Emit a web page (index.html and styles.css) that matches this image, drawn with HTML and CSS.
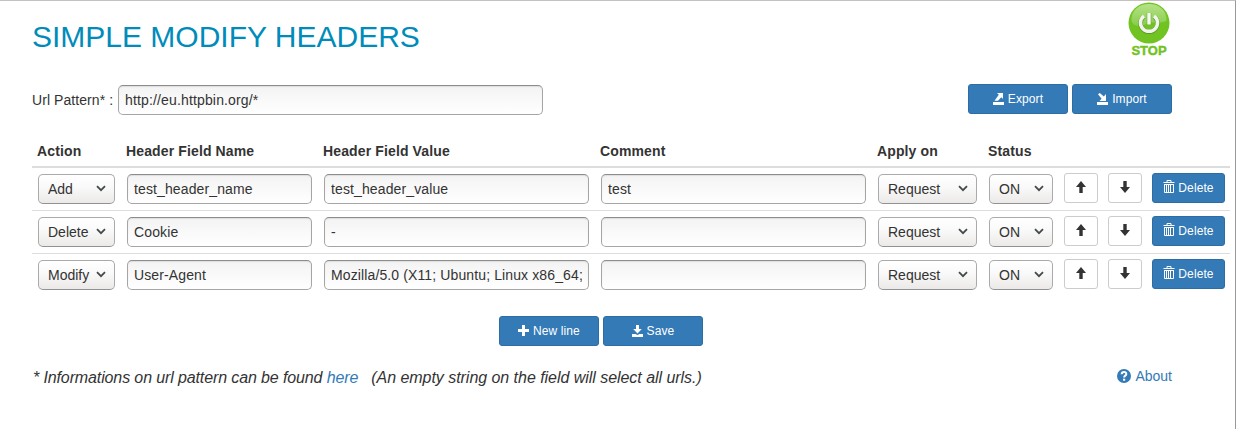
FILE: index.html
```html
<!DOCTYPE html>
<html lang="en">
<head>
<meta charset="utf-8">
<title>Simple Modify Headers</title>
<link rel="stylesheet" href="styles.css">
</head>
<body>
<svg class="defs" aria-hidden="true">
  <defs>
    <linearGradient id="gloss" x1="0" y1="0" x2="0" y2="1"><stop offset="0" stop-color="#b5e388"/><stop offset="1" stop-color="#87cc48"/></linearGradient>
    <symbol id="chev" viewBox="0 0 10 7"><path d="M1 1.2 5 5.2 9 1.2" fill="none" stroke="#444a4c" stroke-width="1.8"/></symbol>
    <symbol id="up" viewBox="0 0 10 12"><path d="M5 0 10 6H6.7V12H3.3V6H0z"/></symbol>
    <symbol id="down" viewBox="0 0 10 12"><path d="M5 12 10 6H6.7V0H3.3V6H0z"/></symbol>
    <symbol id="trash" viewBox="0 0 12 13"><path d="M.5 2.5h11M4 2.3V.5h4v1.800M1.500 4v8.500h9V4M3.500 5v7M5.500 5v7M7.500 5v7M1.500 4.500h9" fill="none" stroke="#fff"/></symbol>
  </defs>
</svg>
<main class="page">
  <header class="top">
    <h1 class="title">SIMPLE MODIFY HEADERS</h1>
    <div class="power">
      <svg width="42" height="42" viewBox="0 0 42 42">
        <circle cx="21" cy="21" r="20.5" fill="#70c321"/>
        <path d="M3.5 19C3 8 11 2 21 2s18 6 17.500 17C29 23 24 18 18 22 12 26 5 24 3.500 19z" fill="url(#gloss)"/>
        <path d="M16 14.500a8.500 8.500 0 1 0 10 0" fill="none" stroke="#559b19" stroke-width="4.400"/>
        <path d="M16 14a8.500 8.500 0 1 0 10 0" fill="none" stroke="#f2f2f2" stroke-width="3.500"/>
        <path d="M21 11v12" stroke="#6fae38" stroke-width="4.600"/>
        <path d="M21 11v11.500" stroke="#f7f7f7" stroke-width="3.400"/>
      </svg>
      <span class="power-label">STOP</span>
    </div>
  </header>

  <section class="pattern">
    <label class="pattern-label" for="url">Url Pattern* :</label>
    <input class="field pattern-field" id="url" value="http://eu.httpbin.org/*">
    <div class="transfer">
      <button class="btn wide"><svg width="11" height="12" viewBox="0 0 11 12"><path d="M0 9h11v3H0zM4 0h6v6L8.300 4.300 5 7.800H1.500L5.800 1.800z"/></svg>Export</button>
      <button class="btn wide"><svg width="11" height="12" viewBox="0 0 11 12"><path d="M0 9h11v3H0zM1 1.200 2.800 0 6.800 3.500 9 1v7H2.500L4.600 5.800z"/></svg>Import</button>
    </div>
  </section>

  <section class="table">
    <div class="row head">
      <span>Action</span><span>Header Field Name</span><span>Header Field Value</span><span>Comment</span><span>Apply on</span><span>Status</span>
    </div>
    <div class="row">
      <div class="pick"><select><option>Add</option></select><svg><use href="#chev"/></svg></div>
      <input class="field" value="test_header_name">
      <input class="field" value="test_header_value">
      <input class="field" value="test">
      <div class="pick"><select><option>Request</option></select><svg><use href="#chev"/></svg></div>
      <div class="pick"><select><option>ON</option></select><svg><use href="#chev"/></svg></div>
      <button class="btn arrow up"><svg><use href="#up"/></svg></button>
      <button class="btn arrow down"><svg><use href="#down"/></svg></button>
      <button class="btn remove"><svg><use href="#trash"/></svg>Delete</button>
    </div>
    <div class="row">
      <div class="pick"><select><option>Delete</option></select><svg><use href="#chev"/></svg></div>
      <input class="field" value="Cookie">
      <input class="field" value="-">
      <input class="field" value="">
      <div class="pick"><select><option>Request</option></select><svg><use href="#chev"/></svg></div>
      <div class="pick"><select><option>ON</option></select><svg><use href="#chev"/></svg></div>
      <button class="btn arrow up"><svg><use href="#up"/></svg></button>
      <button class="btn arrow down"><svg><use href="#down"/></svg></button>
      <button class="btn remove"><svg><use href="#trash"/></svg>Delete</button>
    </div>
    <div class="row">
      <div class="pick"><select><option>Modify</option></select><svg><use href="#chev"/></svg></div>
      <input class="field" value="User-Agent">
      <input class="field" value="Mozilla/5.0 (X11; Ubuntu; Linux x86_64; rv:52.0)">
      <input class="field" value="">
      <div class="pick"><select><option>Request</option></select><svg><use href="#chev"/></svg></div>
      <div class="pick"><select><option>ON</option></select><svg><use href="#chev"/></svg></div>
      <button class="btn arrow up"><svg><use href="#up"/></svg></button>
      <button class="btn arrow down"><svg><use href="#down"/></svg></button>
      <button class="btn remove"><svg><use href="#trash"/></svg>Delete</button>
    </div>
  </section>

  <div class="actions">
    <button class="btn wide"><svg width="11" height="12" viewBox="0 0 11 12"><path d="M4 0h3v4h4v3H7v4H4V7H0V4h4z"/></svg>New line</button>
    <button class="btn wide"><svg width="11" height="12" viewBox="0 0 11 12"><path d="M0 9h3.500l2 1 2-1H11v3H0zM4 0h3v4h2.800L5.500 8.500 1.200 4H4z"/></svg>Save</button>
  </div>

  <footer class="foot">
    <p class="note">* Informations on url pattern can be found <a href="#">here</a><span class="hint">(An empty string on the field will select all urls.)</span></p>
    <a class="about" href="#"><svg width="14" height="14" viewBox="0 0 14 14"><circle cx="7" cy="7" r="7" fill="#337ab7"/><path d="M4.700 5.300C4.700 2.300 9.500 2.400 9.300 5.100 9.200 6.800 7.200 6.500 7.100 8.500" fill="none" stroke="#fff" stroke-width="2"/><path d="M6 9.700h2.200v2H6z" fill="#fff"/></svg>About</a>
  </footer>
</main>
</body>
</html>
```

FILE: styles.css
```css
* { box-sizing: border-box; }
body {
  margin: 0;
  background: #fff;
  color: #333;
  font: 14px/20px "Liberation Sans", Arial, sans-serif;
}
.defs { position: absolute; width: 0; height: 0; }
.page {
  height: 429px;
  overflow: hidden;
  border-top: 1px solid #c4c1be;
  border-right: 1px solid #999;
  padding-left: 32px;
}
a { color: #337ab7; text-decoration: none; }
button, input, select { font-family: inherit; margin: 0; }

.top {
  display: flex;
  justify-content: space-between;
  height: 84px;
  width: 1140px;
}
.title {
  margin: 19px 0 0;
  color: #008cba;
  font-size: 30px;
  font-weight: 400;
  line-height: 34px;
}
.power {
  display: flex;
  flex-direction: column;
  align-items: center;
  padding-top: 1px;
  width: 46px;
}
.power-label {
  color: #70c321;
  font-size: 13px;
  font-weight: 700;
  line-height: 14px;
  -webkit-text-stroke: 0.4px #70c321;
}

.pattern { display: flex; width: 1140px; height: 57px; }
.pattern-label { width: 86px; padding-top: 5px; white-space: nowrap; letter-spacing: 0.07px; }
.transfer { display: flex; gap: 4px; margin: -1px 0 0 auto; }

.field {
  width: 100%;
  height: 30px;
  padding: 0 6px;
  border: 1px solid #a5a5a3;
  border-top-color: #8c8c8a;
  border-radius: 5px;
  background: linear-gradient(#f3f3f3, #fff);
  box-shadow: inset 0 1px 1px #dedede;
  color: #333;
  font-size: 14px;
  letter-spacing: 0.12px;
}
.pattern-field { width: 425px; letter-spacing: 0.15px; }

.btn {
  display: flex;
  align-items: center;
  justify-content: center;
  height: 30px;
  padding: 0;
  border: 1px solid #2e6da4;
  border-radius: 3px;
  background: #337ab7;
  color: #fff;
  font-size: 12px;
  line-height: 18px;
  letter-spacing: 0.1px;
}
.btn svg { fill: currentColor; }
.wide { width: 100px; gap: 4px; }

.table { width: 1198px; }
.row {
  display: grid;
  grid-template-columns: 77px 185px 265px 265px 99px 64px 34px 34px 73px;
  column-gap: 12px;
  height: 43px;
  padding: 6px 0 0 6px;
  border-bottom: 1px solid #ddd;
}
.row:last-child { border-bottom: 0; }
.head {
  height: 26px;
  padding-top: 0;
  border-bottom: 2px solid #ddd;
  font-weight: 700;
  line-height: 18px;
  letter-spacing: 0.13px;
}
.head span { margin-left: -1px; white-space: nowrap; }
.pick { position: relative; height: 30px; }
.pick select {
  width: 100%;
  height: 30px;
  padding: 0 0 0 9px;
  appearance: none;
  border: 1px solid #aaa;
  border-bottom-color: #929292;
  border-radius: 5px;
  background: linear-gradient(#fff, #fafafa 40%, #ebeae8);
  color: #333;
  font-size: 14px;
}
.pick svg {
  position: absolute;
  top: 11px;
  right: 9px;
  width: 10px;
  height: 7px;
}
.row .btn { margin-top: -1px; }
.arrow { width: 34px; border-color: #ccc; background: #fff; color: #333; }
.arrow svg { width: 10px; height: 12px; margin-top: -2px; }
.up { margin-left: -1px; }
.down { margin-left: -3px; }
.remove { width: 73px; margin-left: -5px; gap: 3px; }
.remove svg { width: 12px; height: 13px; margin-top: -3px; }

.actions { display: flex; gap: 4px; padding: 19px 0 0 467px; }
.foot {
  display: flex;
  justify-content: space-between;
  width: 1140px;
  padding-top: 21px;
}
.note {
  margin: 1px 0 0 1px;
  font-size: 16px;
  font-style: italic;
  letter-spacing: -0.12px;
  white-space: nowrap;
}
.hint { margin-left: 13px; letter-spacing: -0.04px; }
.about { display: flex; align-items: center; gap: 4px; height: 18px; }
```
